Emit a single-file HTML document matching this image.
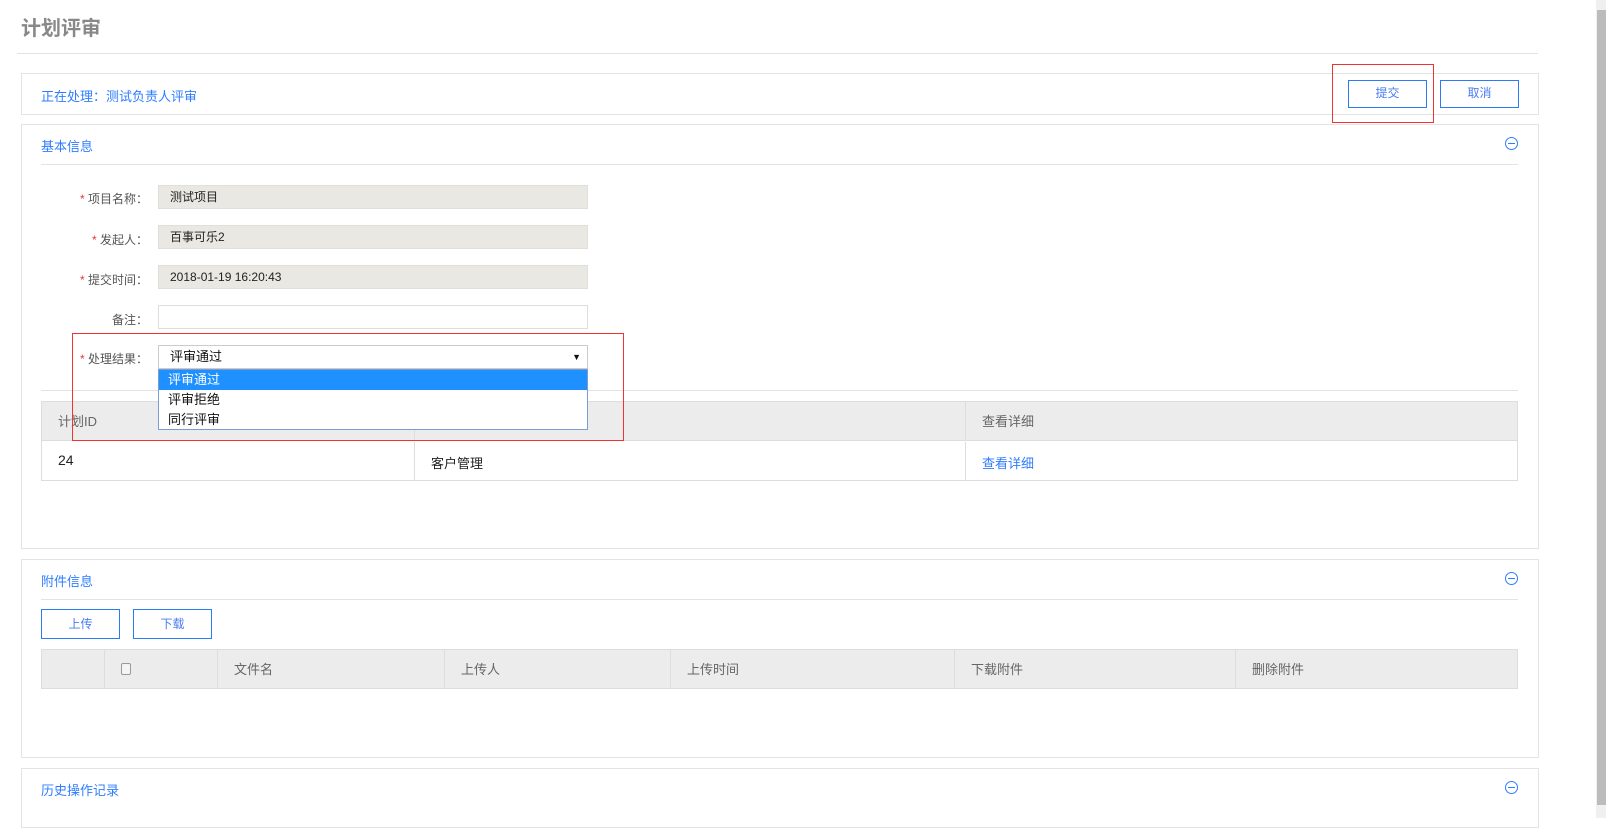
<!DOCTYPE html>
<html><head><meta charset="utf-8"><style>
*{box-sizing:border-box;margin:0;padding:0}
body{width:1606px;height:818px;overflow:hidden;background:#fff;font-family:"Liberation Sans","Noto Sans CJK SC",sans-serif;font-size:12px;color:#333;position:relative}
.a{position:absolute}
.panel{position:absolute;left:21px;width:1518px;border:1px solid #e3e3e3;background:#fff}
.line{position:absolute;height:1px;background:#e3e3e3}
.blue{color:#2f7dff}
.btn{position:absolute;border:1.5px solid #2a7bf5;color:#4a7cf0;text-align:center;font-size:12px;background:#fff}
.lbl{position:absolute;width:100px;left:48px;text-align:right;color:#555}
.lbl i{color:#e33;font-style:normal}
.inp{position:absolute;left:158px;width:430px;height:24px;background:#e9e8e2;border:1px solid #e0e0da;padding-left:11px;line-height:22px;color:#222}
.circ{position:absolute;width:13px;height:13px;border:1.3px solid #2f7dff;border-radius:50%}
.circ:after{content:"";position:absolute;left:2px;right:2px;top:5px;height:1.3px;background:#2f7dff}
.th{position:absolute;top:0;height:39px;line-height:39px;color:#666;font-size:13px;padding-left:16px;border-left:1px solid #ddd}
</style></head><body>
<div class="a" style="left:21px;top:12px;font-size:20px;font-weight:bold;color:#888">计划评审</div>
<div class="line" style="left:17px;top:53px;width:1521px"></div>

<div class="panel" style="top:73px;height:42px"></div>
<div class="a blue" style="left:41px;top:86px;font-size:13px">正在处理：测试负责人评审</div>
<div class="btn" style="left:1348px;top:80px;width:79px;height:28px;line-height:25px">提交</div>
<div class="btn" style="left:1440px;top:80px;width:79px;height:28px;line-height:25px">取消</div>
<div class="a" style="left:1332px;top:64px;width:102px;height:59px;border:1px solid #e33"></div>

<div class="panel" style="top:124px;height:425px"></div>
<div class="a blue" style="left:41px;top:136px;font-size:13px">基本信息</div>
<div class="circ" style="left:1505px;top:137px"></div>
<div class="line" style="left:41px;top:164px;width:1477px"></div>

<div class="lbl" style="top:190px"><i>* </i>项目名称：</div>
<div class="inp" style="top:185px">测试项目</div>
<div class="lbl" style="top:231px"><i>* </i>发起人：</div>
<div class="inp" style="top:225px">百事可乐2</div>
<div class="lbl" style="top:271px"><i>* </i>提交时间：</div>
<div class="inp" style="top:265px">2018-01-19 16:20:43</div>
<div class="lbl" style="top:311px">备注：</div>
<div class="inp" style="top:305px;background:#fff;border-color:#ddd"></div>
<div class="lbl" style="top:350px"><i>* </i>处理结果：</div>
<div class="inp" style="top:345px;background:#fff;border-color:#ccc;font-size:13px;color:#111">评审通过<span style="position:absolute;right:6px;top:0;font-size:9px">▼</span></div>

<div class="line" style="left:41px;top:390px;width:1477px"></div>
<div class="a" style="left:41px;top:401px;width:1477px;height:80px;border:1px solid #ddd">
 <div class="a" style="left:0;top:0;width:1475px;height:39px;background:#ececec;border-bottom:1px solid #ddd"></div>
 <div class="th" style="left:0;border-left:none">计划ID</div>
 <div class="th" style="left:372px;width:551px"></div>
 <div class="th" style="left:923px">查看详细</div>
 <div class="a" style="left:16px;top:50px;font-size:14px;color:#222">24</div>
 <div class="a" style="left:372px;top:40px;height:39px;border-left:1px solid #ddd;padding:11px 0 0 16px;font-size:13px;color:#222">客户管理</div>
 <div class="a" style="left:923px;top:40px;height:39px;border-left:1px solid #ddd;padding:11px 0 0 16px;font-size:13px;color:#2f7dff">查看详细</div>
</div>

<div class="a" style="left:158px;top:369px;width:430px;height:61px;border:1px solid #7a9cd3;background:#fff;font-size:13px;color:#111">
 <div style="height:20px;line-height:20px;background:#1e90ff;color:#fff;padding-left:9px">评审通过</div>
 <div style="height:20px;line-height:20px;padding-left:9px">评审拒绝</div>
 <div style="height:19px;line-height:19px;padding-left:9px">同行评审</div>
</div>
<div class="a" style="left:72px;top:333px;width:552px;height:108px;border:1px solid #e33"></div>

<div class="panel" style="top:559px;height:199px"></div>
<div class="a blue" style="left:41px;top:571px;font-size:13px">附件信息</div>
<div class="circ" style="left:1505px;top:572px"></div>
<div class="line" style="left:41px;top:599px;width:1477px"></div>
<div class="btn" style="left:41px;top:609px;width:79px;height:30px;line-height:28px">上传</div>
<div class="btn" style="left:133px;top:609px;width:79px;height:30px;line-height:28px">下载</div>
<div class="a" style="left:41px;top:649px;width:1477px;height:40px;background:#ececec;border:1px solid #ddd">
 <div class="th" style="left:62px;width:113px"><span style="display:inline-block;width:10px;height:12px;border:1px solid #999;border-radius:2px;background:#f4f4f4;margin-top:13px;vertical-align:top"></span></div>
 <div class="th" style="left:175px">文件名</div>
 <div class="th" style="left:402px">上传人</div>
 <div class="th" style="left:628px">上传时间</div>
 <div class="th" style="left:912px">下载附件</div>
 <div class="th" style="left:1193px">删除附件</div>
</div>

<div class="panel" style="top:768px;height:60px"></div>
<div class="a blue" style="left:41px;top:780px;font-size:13px">历史操作记录</div>
<div class="circ" style="left:1505px;top:781px"></div>

<div class="a" style="left:1596px;top:0;width:10px;height:818px;background:#f0f0f0"></div>
<div class="a" style="left:1597px;top:10px;width:9px;height:795px;background:#bcbcbc"></div>
</body></html>
